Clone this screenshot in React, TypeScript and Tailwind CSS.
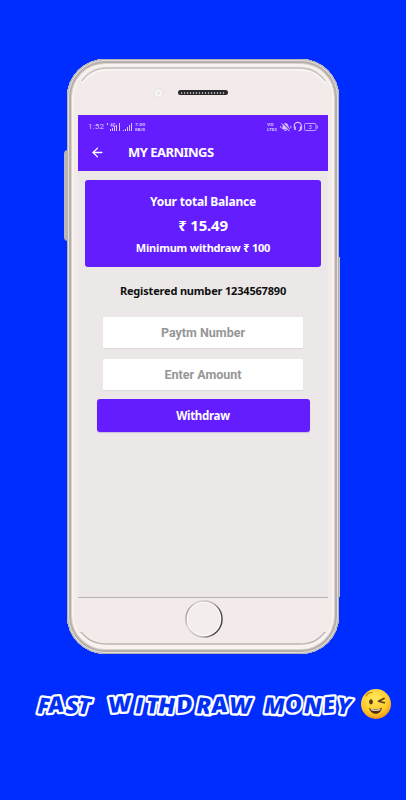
import { ArrowLeft } from "lucide-react"

function StatusBar() {
  return (
    <div className="flex h-6 items-center justify-between pl-[10px] pr-[10px] text-[#d8c4ff]">
      <div className="flex items-center">
        <span className="font-[Roboto] text-[8px] leading-none tracking-[0.2px]">1:52</span>
        <svg className="ml-[3px]" width="42" height="12" viewBox="0 0 42 12" fill="currentColor">
          <path d="M0 2h1v2H0zM3 8h1v2H3zM5 7h1v3H5zM7 6h1v4H7zM9 4h1v6H9zM12 2h1v8h-1zM16 9h1v1h-1zM18 8h1v2h-1zM20 6h1v4h-1zM22 4h1v6h-1zM24 2h1v8h-1z" />
          <text x="3" y="5.5" fontSize="4.5" fontFamily="Roboto" fontWeight="700">4G</text>
          <text x="28" y="5.2" fontSize="4" fontFamily="Roboto" fontWeight="700" textLength="10" lengthAdjust="spacingAndGlyphs">7.00</text>
          <text x="28" y="10.2" fontSize="4" fontFamily="Roboto" fontWeight="700" textLength="10" lengthAdjust="spacingAndGlyphs">KB/S</text>
        </svg>
      </div>
      <svg width="51" height="12" viewBox="0 0 51 12" fill="none" stroke="currentColor">
        <g fill="currentColor" stroke="none" fontFamily="Roboto" fontWeight="700">
          <text x="0" y="5.3" fontSize="4" textLength="6.5" lengthAdjust="spacingAndGlyphs">VO</text>
          <text x="0" y="10.3" fontSize="4" textLength="10" lengthAdjust="spacingAndGlyphs">LTE2</text>
        </g>
        <path d="M16 5.5c0-4 5-4 5 0l1.5 2.5h-7zM17.5 9.5h2M13.8 4.8v2.4M23.8 4.8v2.4" fill="currentColor" strokeWidth="0.9" />
        <path d="M15.4 1.8l7.8 7.8" stroke="#641dff" strokeWidth="1.2" />
        <path d="M14.5 2.2l8 8" strokeWidth="1" />
        <path d="M27.2 6.5V5a3.6 3.6 0 0 1 7.2 0v1.5c0 2-1 3.3-3 3.3" strokeWidth="1.1" />
        <path d="M28 5.5V9M33.7 5.5V9" strokeWidth="1.7" />
        <rect x="37.5" y="2.5" width="11.5" height="7" rx="1.2" strokeWidth="0.8" />
        <path d="M50.3 4.5v3" strokeWidth="0.8" />
        <text x="43.2" y="8.1" fontSize="6" fontFamily="Roboto" textAnchor="middle" fill="currentColor" stroke="none">3</text>
      </svg>
    </div>
  )
}

function TopBezel() {
  return (
    <div className="relative flex h-[56px] shrink-0 items-start justify-center">
      <svg className="absolute left-0 top-0" width="272" height="56" viewBox="0 0 272 56" fill="none">
        <path d="M15 22C22 13 29 9 41 9h191c12 0 19 4 26 13" stroke="#c4c0c0" strokeWidth="1.5" />
        <path d="M15 24C22 15 29 11 41 11h191c12 0 19 4 26 13" stroke="#faf6f4" strokeWidth="1.5" />
        <circle cx="91.5" cy="34" r="4.3" fill="#faf8f8" stroke="#e3dddd" />
        <circle cx="91.5" cy="34" r="2" fill="#ebe5e6" />
      </svg>
      <div className="relative mt-[31px] flex h-[5px] w-[50px] items-center rounded-full bg-[#29272a] px-[3px]">
        <div className="h-[2px] w-full bg-[repeating-linear-gradient(90deg,#aaa_0,#aaa_1px,#353335_1px,#353335_3px)]" />
      </div>
    </div>
  )
}

function BottomBezel() {
  return (
    <div className="relative flex h-[57px] shrink-0 justify-center">
      <svg className="absolute left-0 top-0" width="272" height="57" viewBox="0 0 272 57" fill="none">
        <defs>
          <linearGradient id="homeRing" x1="0" y1="0" x2="1" y2="0.35">
            <stop offset="0" stopColor="#77706f" />
            <stop offset="0.25" stopColor="#d8d2d1" />
            <stop offset="0.7" stopColor="#bbb4b3" />
            <stop offset="1" stopColor="#494344" />
          </linearGradient>
        </defs>
        <path d="M14 34c7 9 15 12 27 12h191c12 0 19-3 26-12" stroke="#bcb5b4" strokeWidth="1.6" />
        <path d="M14 36c7 9 15 12 27 12h191c12 0 19-3 26-12" stroke="#faf5f3" strokeWidth="1.4" />
        <circle cx="137" cy="21" r="18" fill="#f3eeed" stroke="url(#homeRing)" strokeWidth="1.5" />
        <circle cx="137" cy="21" r="16.7" stroke="#fff" strokeWidth="0.8" />
      </svg>
    </div>
  )
}

function Screen() {
  return (
    <main className="mx-[11px] flex h-[483px] w-[250px] shrink-0 flex-col border-b border-[#b7b3b2] bg-[#ebe8e7]">
      <header className="h-14 shrink-0 bg-[#641dff] text-white">
        <StatusBar />
        <div className="flex h-[27px] items-center pl-[12px]">
          <ArrowLeft size={15} strokeWidth={2.1} />
          <h1 className="ml-[23px] whitespace-nowrap text-[13px] font-bold leading-none tracking-[-0.53px]">MY EARNINGS</h1>
        </div>
      </header>

      <section className="mx-[7px] mt-[9px] flex h-[87px] shrink-0 flex-col items-center rounded-[3px] bg-[#641dff] pt-[12px] font-bold text-white">
        <p className="h-5 text-[12px] leading-5 tracking-[-0.2px]">Your total Balance</p>
        <p className="mt-px h-6 text-[15px] leading-6 tracking-[-0.2px]">₹ 15.49</p>
        <p className="mt-px h-5 text-[11px] leading-5 tracking-[-0.2px]">Minimum withdraw ₹ 100</p>
      </section>

      <p className="mt-[14px] text-center text-[11px] font-bold leading-5 tracking-[-0.18px] text-[#111]">Registered number 1234567890</p>

      <form className="mt-4 flex flex-col items-center font-[Roboto] text-[12.5px] font-bold">
        <input
          className="h-[31px] w-[200px] rounded-[1px] bg-white text-center shadow-[0_1px_1px_rgba(0,0,0,0.07)] outline-none placeholder:text-[#969696]"
          placeholder="Paytm Number"
        />
        <input
          className="mt-[11px] h-[31px] w-[200px] rounded-[1px] bg-white text-center shadow-[0_1px_1px_rgba(0,0,0,0.07)] outline-none placeholder:text-[#969696]"
          placeholder="Enter Amount"
        />
        <button
          type="button"
          className="mt-[9px] h-[33px] w-[213px] rounded-[3px] bg-[#641dff] font-['Noto_Sans','Open_Sans',sans-serif] text-[11.5px] tracking-[-0.3px] text-white shadow-[0_1px_1px_rgba(70,0,190,0.2)]"
        >
          Withdraw
        </button>
      </form>
    </main>
  )
}

function Phone() {
  return (
    <div className="relative h-[595px] w-[272px] shrink-0">
      <div className="absolute -left-[3px] top-[91px] h-[91px] w-1 rounded-l-sm bg-[#b9b5b8]" />
      <div className="absolute -right-px top-[198px] h-[340px] w-1 bg-[#c4bdc8]" />
      <div className="relative flex h-full w-full flex-col overflow-hidden rounded-[38px] bg-[#f3ebea] shadow-[inset_0_0_0_1px_#b4afb0,inset_0_0_0_2px_#e2dedc,inset_0_0_0_4px_#b7afab,inset_0_0_0_5px_#d8d1cd,inset_0_0_0_7px_#f8f3ee]">
        <TopBezel />
        <Screen />
        <BottomBezel />
      </div>
    </div>
  )
}

function Caption() {
  return (
    <div className="mt-[29px] flex w-full items-center pl-[30px]">
      <svg
        width="326"
        height="42"
        viewBox="0 0 326 42"
        fontFamily="Open Sans, sans-serif"
        fontWeight="800"
        fontSize="22"
        fill="#0030f8"
        stroke="#fff"
        strokeWidth="4.6"
        strokeLinejoin="round"
        paintOrder="stroke"
      >
        <text transform="translate(6 30) skewX(-8) scale(.98 1)" x="0 12 29 41" rotate="7 -5 5 8">FAST</text>
        <text transform="translate(78 30) skewX(-7)" x="0 26 37 49 68 87 103 120" rotate="-5 5 3 4 -4 5 -4 2">WITHDRAW</text>
        <text transform="translate(233 30) skewX(-7) scale(.97 1)" x="0 22.5 41 61.5 74.5" rotate="4 -5 4 -4 8">MONEY</text>
      </svg>
      <svg className="ml-[4px]" width="32" height="32" viewBox="0 0 32 32" fill="none">
        <defs>
          <radialGradient id="face" cx="0.45" cy="0.3" r="0.7">
            <stop offset="0" stopColor="#ffe85c" />
            <stop offset="0.7" stopColor="#ffc928" />
            <stop offset="1" stopColor="#ed941d" />
          </radialGradient>
        </defs>
        <circle cx="16" cy="16" r="15" fill="url(#face)" />
        <ellipse cx="11" cy="13.8" rx="1.9" ry="2.6" fill="#573516" />
        <path d="M6 8c1.2-2.5 3.3-3.8 6-3.5" stroke="#d68a1b" strokeWidth="1.5" strokeLinecap="round" />
        <path d="M24 10.5l-5.5 2.7 5.8 1.5" stroke="#573516" strokeWidth="1.7" strokeLinecap="round" strokeLinejoin="round" />
        <path d="M9 20.3c4 1.5 9 1.4 13-.5-.7 3.7-3 6-6.1 6-3.3 0-6-2-6.9-5.5z" fill="#4d2b12" />
        <path d="M10.5 21c3.5 1 7 .9 10.2 0l-.6 1.2c-2.8.8-6 .8-8.9.1z" fill="#fff" />
      </svg>
    </div>
  )
}

export default function App() {
  return (
    <div className="flex h-[800px] w-[406px] flex-col items-center overflow-hidden bg-[#002dff] pt-[59px] font-['Noto_Sans','Open_Sans',sans-serif]">
      <Phone />
      <Caption />
    </div>
  )
}
